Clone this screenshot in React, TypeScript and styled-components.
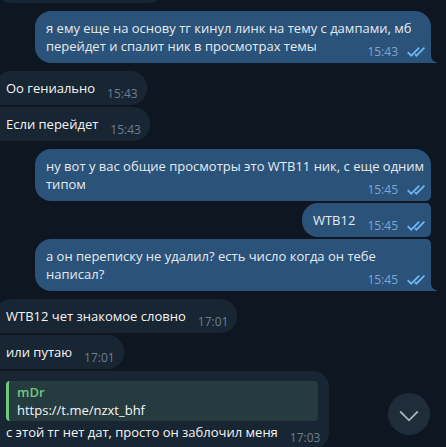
import React from 'react';
import styled, { createGlobalStyle, css } from 'styled-components';

const colors = {
  page: '#0e1621',
  incoming: '#182533',
  outgoing: '#2b5278',
};

const GlobalStyle = createGlobalStyle`
  *, *::before, *::after { box-sizing: border-box; }
  body {
    margin: 0;
    background: ${colors.page};
    font-family: 'Open Sans', 'Noto Sans', sans-serif;
    font-size: 13px;
    line-height: 18px;
    color: #f5f5f5;
  }
`;

const Chat = styled.main`
  position: relative;
  height: 100vh;
  overflow: hidden;
`;

const Messages = styled.ol`
  display: flex;
  flex-direction: column;
  gap: 8px;
  margin: -31px 0 0 -5px;
  padding: 0 15px 0 0;
  list-style: none;
`;

const Group = styled.li<{ $out: boolean }>`
  display: flex;
  flex-direction: column;
  align-items: ${(p) => (p.$out ? 'flex-end' : 'flex-start')};
  gap: 2px;
`;

const Bubble = styled.article<{ $out: boolean; $first: boolean; $last: boolean }>`
  position: relative;
  max-width: calc(100% - 40px);
  min-height: 34px;
  background: ${(p) => (p.$out ? colors.outgoing : colors.incoming)};
  ${(p) => {
    const joinTop = p.$first ? '16px' : '5px';
    const joinBottom = p.$last ? '0' : '5px';
    return p.$out
      ? css`
          padding: 8px 6px 8px 11px;
          border-radius: 16px ${joinTop} ${joinBottom} 16px;
          color: #e4ecf2;
        `
      : css`
          padding: 8px 11px;
          border-radius: ${joinTop} 16px 16px ${joinBottom};
        `;
  }}
`;

const EarlierBubble = styled.div`
  width: 170px;
  height: 34px;
  border-radius: 16px;
  background: ${colors.incoming};
`;

const Tail = styled.svg`
  position: absolute;
  left: 100%;
  bottom: 0;
  fill: ${colors.outgoing};
`;

const Meta = styled.span<{ $out: boolean }>`
  float: right;
  display: flex;
  align-items: center;
  gap: 9px;
  margin: 8px ${(p) => (p.$out ? '0' : '-2px')} -5px 12px;
  font-size: 12px;
  line-height: 14px;
  color: ${(p) => (p.$out ? '#7da8d3' : '#6d7f8f')};
`;

const Quote = styled.blockquote`
  margin: 2px 0 2px;
  padding: 2px 8px;
  border-left: 3px solid #70c97b;
  border-radius: 4px;
  background: #263b3f;
`;

const Author = styled.div`
  font-weight: 600;
  color: #70c97b;
`;

const QuoteLink = styled.a`
  color: inherit;
  text-decoration: none;
`;

const ScrollDown = styled.button`
  position: absolute;
  right: 16px;
  bottom: 12px;
  display: flex;
  align-items: center;
  justify-content: center;
  width: 42px;
  height: 42px;
  padding: 4px 0 0;
  border: 0;
  border-radius: 50%;
  background: #1f2c3a;
  cursor: pointer;
`;

type Message = {
  text: string;
  time: string;
  quote?: { author: string; link: string };
};

const groups: { out: boolean; messages: Message[] }[] = [
  {
    out: true,
    messages: [
      {
        text: 'я ему еще на основу тг кинул линк на тему с дампами, мб перейдет и спалит ник в просмотрах темы',
        time: '15:43',
      },
    ],
  },
  {
    out: false,
    messages: [
      { text: 'Оо гениально', time: '15:43' },
      { text: 'Если перейдет', time: '15:43' },
    ],
  },
  {
    out: true,
    messages: [
      { text: 'ну вот у вас общие просмотры это WTB11 ник, с еще одним типом', time: '15:45' },
      { text: 'WTB12', time: '15:45' },
      { text: 'а он переписку не удалил? есть число когда он тебе написал?', time: '15:45' },
    ],
  },
  {
    out: false,
    messages: [
      { text: 'WTB12 чет знакомое словно', time: '17:01' },
      { text: 'или путаю', time: '17:01' },
      {
        text: 'с этой тг нет дат, просто он заблочил меня',
        time: '17:03',
        quote: { author: 'mDr', link: 'https://t.me/nzxt_bhf' },
      },
    ],
  },
];

function ReadTicks() {
  return (
    <svg width="18" height="10" viewBox="0 0 18 10" fill="none" stroke="#6cb9f5" strokeWidth="1.7" role="img" aria-label="Прочитано">
      <path d="M0.7 5.2 L4.2 8.7 L12.2 0.7" />
      <path d="M7.9 7.2 L9.4 8.7 L17.4 0.7" />
    </svg>
  );
}

export default function App() {
  return (
    <>
      <GlobalStyle />
      <Chat>
        <Messages>
          <Group $out={false}>
            <EarlierBubble />
          </Group>
          {groups.map((group, g) => (
            <Group key={g} $out={group.out}>
              {group.messages.map((message, i) => {
                const last = i === group.messages.length - 1;
                return (
                  <Bubble key={i} $out={group.out} $first={i === 0} $last={last}>
                    {message.quote && (
                      <Quote>
                        <Author>{message.quote.author}</Author>
                        <QuoteLink href={message.quote.link}>{message.quote.link}</QuoteLink>
                      </Quote>
                    )}
                    {message.text}
                    <Meta $out={group.out}>
                      <time>{message.time}</time>
                      {group.out && <ReadTicks />}
                    </Meta>
                    {group.out && last && (
                      <Tail width="6" height="8" viewBox="0 0 6 8" aria-hidden="true">
                        <path d="M0 0 C0 4 2 6.5 6 7.5 V8 H0 Z" />
                      </Tail>
                    )}
                  </Bubble>
                );
              })}
            </Group>
          ))}
        </Messages>
        <ScrollDown type="button" aria-label="Вниз">
          <svg width="20" height="12" viewBox="0 0 20 12" fill="none" stroke="#a9b1b9" strokeWidth="1.8" aria-hidden="true">
            <path d="M1.2 1.5 L10 10.3 L18.8 1.5" />
          </svg>
        </ScrollDown>
      </Chat>
    </>
  );
}
